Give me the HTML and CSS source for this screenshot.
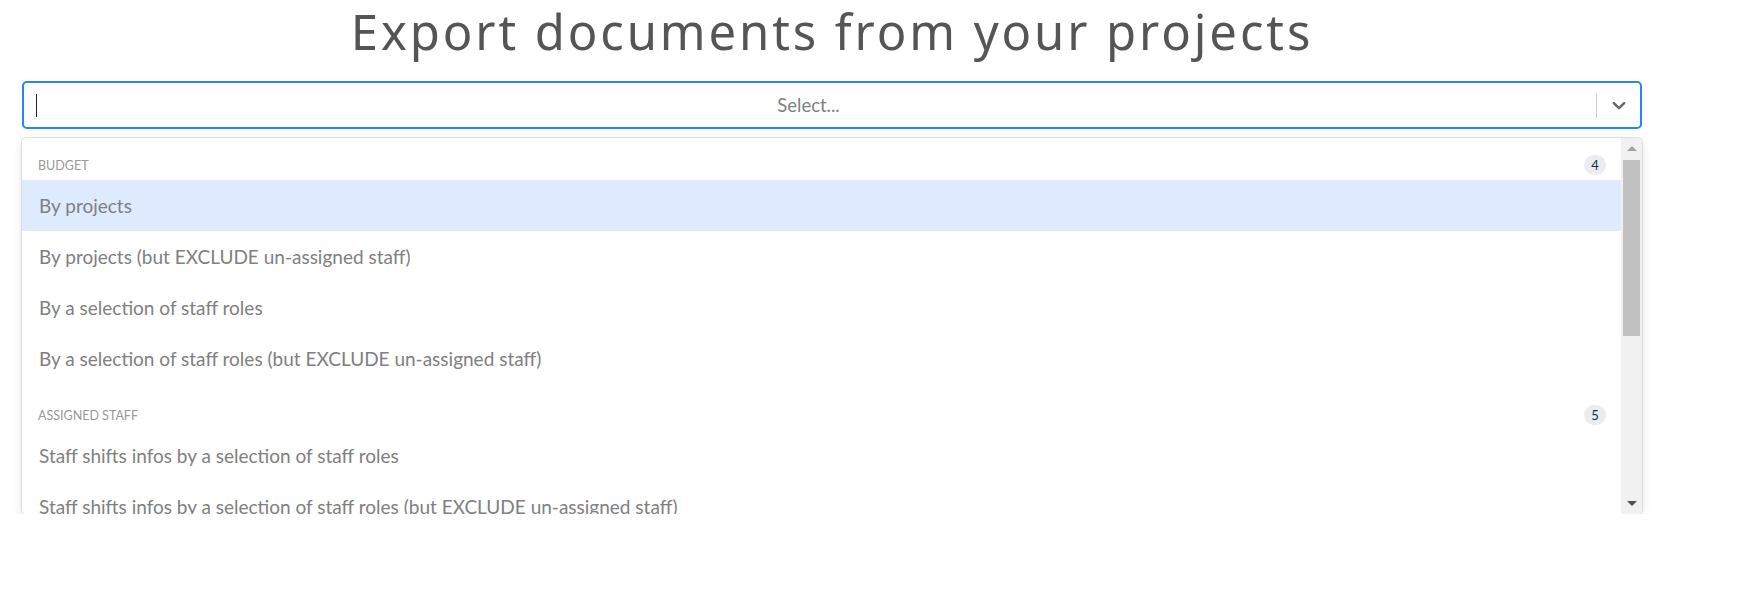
FILE: index.html
```html
<!DOCTYPE html>
<html lang="en">
<head>
<meta charset="utf-8">
<title>Export documents</title>
<link rel="stylesheet" href="styles.css">
</head>
<body>
<div class="page">
  <h1 class="title">Export documents from your projects</h1>
  <div class="select">
    <div class="control">
      <div class="value">
        <span class="caret"></span>
        <span class="placeholder">Select...</span>
      </div>
      <div class="indicators">
        <span class="sep"></span>
        <span class="dropdown">
          <svg width="20" height="20" viewBox="0 0 20 20"><path d="M4.516 7.548c0.436-0.446 1.043-0.481 1.576 0l3.908 3.747 3.908-3.747c0.533-0.481 1.141-0.446 1.574 0 0.436 0.445 0.408 1.197 0 1.615-0.406 0.418-4.695 4.502-4.695 4.502-0.217 0.223-0.502 0.335-0.787 0.335s-0.57-0.112-0.789-0.335c0 0-4.287-4.084-4.695-4.502s-0.436-1.170 0-1.615z" fill="#666"/></svg>
        </span>
      </div>
    </div>
    <div class="menu">
      <div class="list">
        <div class="group">
          <div class="heading"><span>Budget</span><span class="badge">4</span></div>
          <div class="option focused">By projects</div>
          <div class="option">By projects (but EXCLUDE un-assigned staff)</div>
          <div class="option">By a selection of staff roles</div>
          <div class="option">By a selection of staff roles (but EXCLUDE un-assigned staff)</div>
        </div>
        <div class="group">
          <div class="heading"><span>Assigned staff</span><span class="badge">5</span></div>
          <div class="option">Staff shifts infos by a selection of staff roles</div>
          <div class="option">Staff shifts infos by a selection of staff roles (but EXCLUDE un-assigned staff)</div>
        </div>
      </div>
      <div class="scrollbar">
        <span class="sb-btn up"></span>
        <div class="sb-track"><div class="sb-thumb"></div></div>
        <span class="sb-btn down"></span>
      </div>
    </div>
  </div>
</div>
</body>
</html>
```

FILE: styles.css
```css
* { box-sizing: border-box; }
html, body { margin: 0; padding: 0; background: #fff; }
body { font-family: "Lato", "Liberation Sans", sans-serif; }

.page {
  width: 1620px;
  margin-left: 22px;
  padding-top: 2px;
}

.title {
  margin: 0;
  text-align: center;
  font-family: "Noto Sans", "Open Sans", sans-serif;
  font-weight: 400;
  font-size: 49px;
  letter-spacing: 2.9px;
  line-height: 58px;
  color: #555;
}

.select { margin-top: 21px; }

.control {
  display: flex;
  align-items: center;
  height: 48px;
  border: 2px solid #2684ff;
  border-radius: 5px;
  background: #fff;
}

.value {
  flex: 1;
  display: flex;
  align-items: center;
  height: 100%;
  padding-left: 12px;
}
.caret {
  width: 1px;
  height: 23px;
  background: #222;
}
.placeholder {
  flex: 1;
  text-align: center;
  font-size: 18.5px;
  color: #808080;
  padding-right: 16px;
}

.indicators {
  display: flex;
  align-items: center;
  height: 100%;
}
.sep {
  width: 1px;
  height: 25px;
  background: #ccc;
}
.dropdown {
  width: 43px;
  display: flex;
  justify-content: center;
  align-items: center;
  padding-left: 1px;
}
.dropdown svg { display: block; width: 22px; height: 22px; }

.menu {
  margin-top: 9px;
  height: 376px;
  display: flex;
  background: #fff;
  border-radius: 4px;
  box-shadow: 0 0 0 1px rgba(0,0,0,0.1), 0 4px 11px rgba(0,0,0,0.1);
  overflow: hidden;
}

.list {
  flex: 1;
  overflow: hidden;
  padding-top: 4px;
}

.group { padding: 8px 0; }

.heading {
  display: flex;
  justify-content: space-between;
  align-items: center;
  height: 30px;
  padding: 0 15px 0 16px;
  font-size: 12.5px;
  text-transform: uppercase;
  color: #999;
}
.badge {
  min-width: 22px;
  height: 20px;
  line-height: 20px;
  border-radius: 10px;
  background: #ebecf0;
  color: #172b4d;
  font-size: 13px;
  text-align: center;
  text-transform: none;
}

.option {
  height: 51px;
  line-height: 51px;
  padding: 0 17px;
  font-size: 19px;
  color: #808080;
  white-space: nowrap;
}
.option.focused { background: #deebff; }

.scrollbar {
  width: 21px;
  display: flex;
  flex-direction: column;
  background: #f1f1f1;
}
.sb-btn {
  height: 21px;
  display: flex;
  justify-content: center;
  align-items: center;
}
.sb-btn::before {
  content: "";
  width: 0;
  height: 0;
  border-left: 5px solid transparent;
  border-right: 5px solid transparent;
}
.sb-btn.up::before { border-bottom: 5px solid #a3a3a3; }
.sb-btn.down::before { border-top: 5px solid #505050; }
.sb-track {
  flex: 1;
  padding: 1px 2px;
}
.sb-thumb {
  height: 176px;
  background: #c1c1c1;
}
```
